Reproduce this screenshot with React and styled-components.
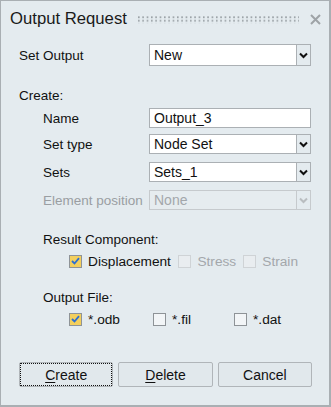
import React from "react";
import styled, { createGlobalStyle } from "styled-components";

const Styles = createGlobalStyle`
  html, body {
    margin: 0;
    padding: 0;
    background: #e4ebef;
  }
  body {
    font-family: "Liberation Sans", Arial, sans-serif;
    font-size: 13.5px;
    color: #111;
  }
`;

const Dialog = styled.div`
  box-sizing: border-box;
  width: 331px;
  height: 407px;
  border: 1px solid #a9afb3;
  border-right-width: 2px;
  border-bottom-width: 2px;
  background: #e4ebef;
  display: flex;
  flex-direction: column;
`;

const TitleBar = styled.div`
  display: flex;
  align-items: center;
  height: 36px;
  padding: 0 8px 0 9px;
  gap: 11px;
`;

const Title = styled.div`
  font-size: 16.7px;
  color: #1a1a1a;
  white-space: nowrap;
`;

const Grip = styled.svg`
  flex: 1;
  height: 8px;
  margin-top: 1px;
`;

const Close = styled.svg`
  width: 11px;
  height: 11px;
  flex: none;
`;

const Body = styled.div`
  padding: 7px 18px 0 18px;
  display: flex;
  flex-direction: column;
`;

const Row = styled.div`
  display: grid;
  grid-template-columns: ${({ indent }) => (indent ? "106px" : "130px")} 1fr;
  align-items: center;
  margin-top: ${({ top }) => top || 0}px;
  padding-left: ${({ indent }) => (indent ? 24 : 0)}px;
  color: ${({ disabled }) => (disabled ? "#9a9ea2" : "#111")};
`;

const Section = styled.div`
  margin-top: ${({ top }) => top}px;
  padding-left: ${({ indent }) => indent || 0}px;
  height: 18px;
  display: flex;
  align-items: center;
`;

const Field = styled.div`
  display: flex;
  height: ${({ h }) => h || 20}px;
  box-sizing: border-box;
  border: 1px solid ${({ disabled }) => (disabled ? "#c6cacd" : "#abb0b4")};
  background: ${({ disabled }) => (disabled ? "#e6ecef" : "#fff")};
  color: ${({ disabled }) => (disabled ? "#a3a7ab" : "#111")};
`;

const FieldText = styled.div`
  flex: 1;
  padding-left: 4px;
  display: flex;
  align-items: center;
  font-size: 14px;
`;

const Arrow = styled.div`
  width: 13px;
  border-left: 1px solid ${({ disabled }) => (disabled ? "#c6cacd" : "#abb0b4")};
  background: #e4ebef;
  display: flex;
  align-items: center;
  justify-content: center;
`;

const Checks = styled.div`
  display: flex;
  align-items: center;
  height: 20px;
  padding-left: 50px;
  margin-top: ${({ top }) => top}px;
`;

const CheckItem = styled.label`
  display: flex;
  align-items: center;
  gap: 6px;
  width: ${({ w }) => w}px;
  font-size: 13.7px;
  color: ${({ disabled }) => (disabled ? "#a3a7ab" : "#111")};
`;

const Box = styled.span`
  box-sizing: border-box;
  width: 13px;
  height: 13px;
  border: 1px solid ${({ disabled }) => (disabled ? "#cfd3d6" : "#8e9397")};
  background: ${({ checked, disabled }) =>
    checked ? "#f3cf5d" : disabled ? "#e9edf0" : "#f2f5f7"};
  display: flex;
  align-items: center;
  justify-content: center;
`;

const Buttons = styled.div`
  margin-top: auto;
  margin-bottom: 18px;
  padding: 0 17px 0 18px;
  display: grid;
  grid-template-columns: repeat(3, 1fr);
  gap: 5px;
`;

const Button = styled.button`
  height: 25px;
  box-sizing: border-box;
  border: 1px solid #b0b5b9;
  border-radius: 2px;
  background: #e1e8ec;
  font-family: inherit;
  font-size: 14px;
  color: #111;
  padding: 0;
  outline: ${({ focused }) => (focused ? "1px dotted #111" : "none")};
  outline-offset: -2px;
  u {
    text-decoration-thickness: 1px;
    text-underline-offset: 2px;
  }
`;

const Chevron = ({ disabled }) => (
  <svg width="9" height="7" viewBox="0 0 9 7">
    <path
      d="M1 1.5 L4.5 5 L8 1.5"
      fill="none"
      stroke={disabled ? "#b9bdc0" : "#111"}
      strokeWidth="2"
    />
  </svg>
);

const Tick = () => (
  <svg width="9" height="8" viewBox="0 0 9 8">
    <path d="M1 4 L3.5 6.5 L8 1.2" fill="none" stroke="#2d6fd0" strokeWidth="1.8" />
  </svg>
);

const Select = ({ value, disabled, h }) => (
  <Field disabled={disabled} h={h}>
    <FieldText>{value}</FieldText>
    <Arrow disabled={disabled}>
      <Chevron disabled={disabled} />
    </Arrow>
  </Field>
);

const Check = ({ label, checked, disabled, w }) => (
  <CheckItem disabled={disabled} w={w}>
    <Box checked={checked} disabled={disabled}>
      {checked && <Tick />}
    </Box>
    {label}
  </CheckItem>
);

export default function App() {
  return (
    <>
      <Styles />
      <Dialog>
        <TitleBar>
          <Title>Output Request</Title>
          <Grip>
            <defs>
              <pattern id="dots" width="4.33" height="3.6" patternUnits="userSpaceOnUse">
                <rect x="0" y="0.4" width="1.6" height="1.6" fill="#8f969b" />
              </pattern>
            </defs>
            <rect width="100%" height="7.2" fill="url(#dots)" />
          </Grip>
          <Close viewBox="0 0 11 11">
            <path d="M1 1 L10 10 M10 1 L1 10" stroke="#9ea3a7" strokeWidth="2" />
          </Close>
        </TitleBar>
        <Body>
          <Row>
            <span>Set Output</span>
            <Select value="New" h={22} />
          </Row>
          <Section top={20}>Create:</Section>
          <Row indent top={4}>
            <span>Name</span>
            <Field>
              <FieldText>Output_3</FieldText>
            </Field>
          </Row>
          <Row indent top={6}>
            <span>Set type</span>
            <Select value="Node Set" />
          </Row>
          <Row indent top={8}>
            <span>Sets</span>
            <Select value="Sets_1" />
          </Row>
          <Row indent top={8} disabled>
            <span>Element position</span>
            <Select value="None" disabled />
          </Row>
          <Section top={20} indent={24}>Result Component:</Section>
          <Checks top={3}>
            <Check label="Displacement" checked w={113} />
            <Check label="Stress" disabled w={67} />
            <Check label="Strain" disabled w={70} />
          </Checks>
          <Section top={17} indent={24}>Output File:</Section>
          <Checks top={3}>
            <Check label="*.odb" checked w={84} />
            <Check label="*.fil" w={81} />
            <Check label="*.dat" w={70} />
          </Checks>
        </Body>
        <Buttons>
          <Button focused>
            <u>C</u>reate
          </Button>
          <Button>
            <u>D</u>elete
          </Button>
          <Button>Cancel</Button>
        </Buttons>
      </Dialog>
    </>
  );
}
